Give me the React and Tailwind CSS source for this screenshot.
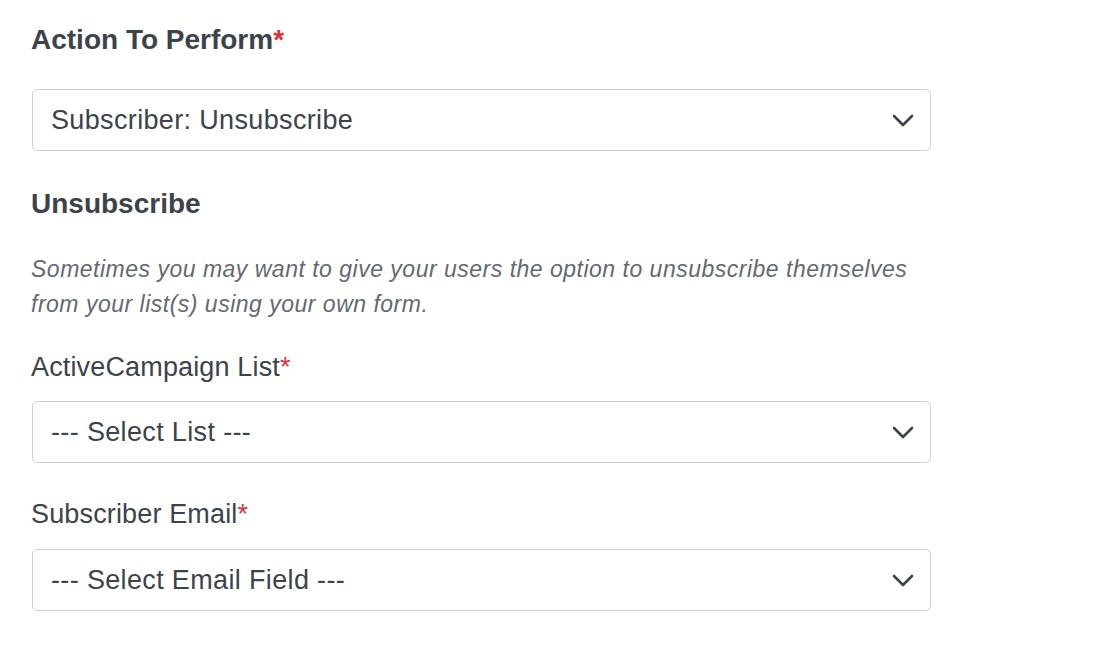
import React from "react"

const Chevron = () => (
  <svg width="22" height="13" viewBox="0 0 22 13" fill="none" className="shrink-0">
    <path d="M2 2l9 9 9-9" stroke="#3c434a" strokeWidth="2.6" strokeLinecap="round" strokeLinejoin="round" />
  </svg>
)

const Select = ({ value }) => (
  <div className="ml-px w-[899px] h-[62px] flex items-center justify-between pl-[18px] pr-[16px] border border-[#cfcfcf] rounded-[5px] bg-white">
    <span className="text-[27px] tracking-[0.35px] text-[#3c434a]">{value}</span>
    <Chevron />
  </div>
)

const Req = () => <span className="text-[#d63638]">*</span>

export default function App() {
  return (
    <div className="min-h-screen w-[1116px] h-[648px] bg-white pl-[31px] pt-[24px] overflow-hidden font-['Liberation_Sans',Arial,sans-serif] text-[#3c434a]">
      <h2 className="text-[28px] leading-[32px] font-bold">
        Action To Perform<Req />
      </h2>
      <div className="mt-[33px]">
        <Select value="Subscriber: Unsubscribe" />
      </div>

      <h3 className="mt-[37px] text-[28px] leading-[32px] font-bold">Unsubscribe</h3>
      <p className="mt-[32px] w-[920px] text-[23px] tracking-[0.5px] leading-[35px] italic text-[#646970]">
        Sometimes you may want to give your users the option to unsubscribe themselves
        <br />
        from your list(s) using your own form.
      </p>

      <label className="block mt-[29px] text-[27px] tracking-[0.15px] leading-[32px]">
        ActiveCampaign List<Req />
      </label>
      <div className="mt-[18px]">
        <Select value="--- Select List ---" />
      </div>

      <label className="block mt-[35px] text-[27px] tracking-[0.15px] leading-[32px]">
        Subscriber Email<Req />
      </label>
      <div className="mt-[19px]">
        <Select value="--- Select Email Field ---" />
      </div>
    </div>
  )
}
